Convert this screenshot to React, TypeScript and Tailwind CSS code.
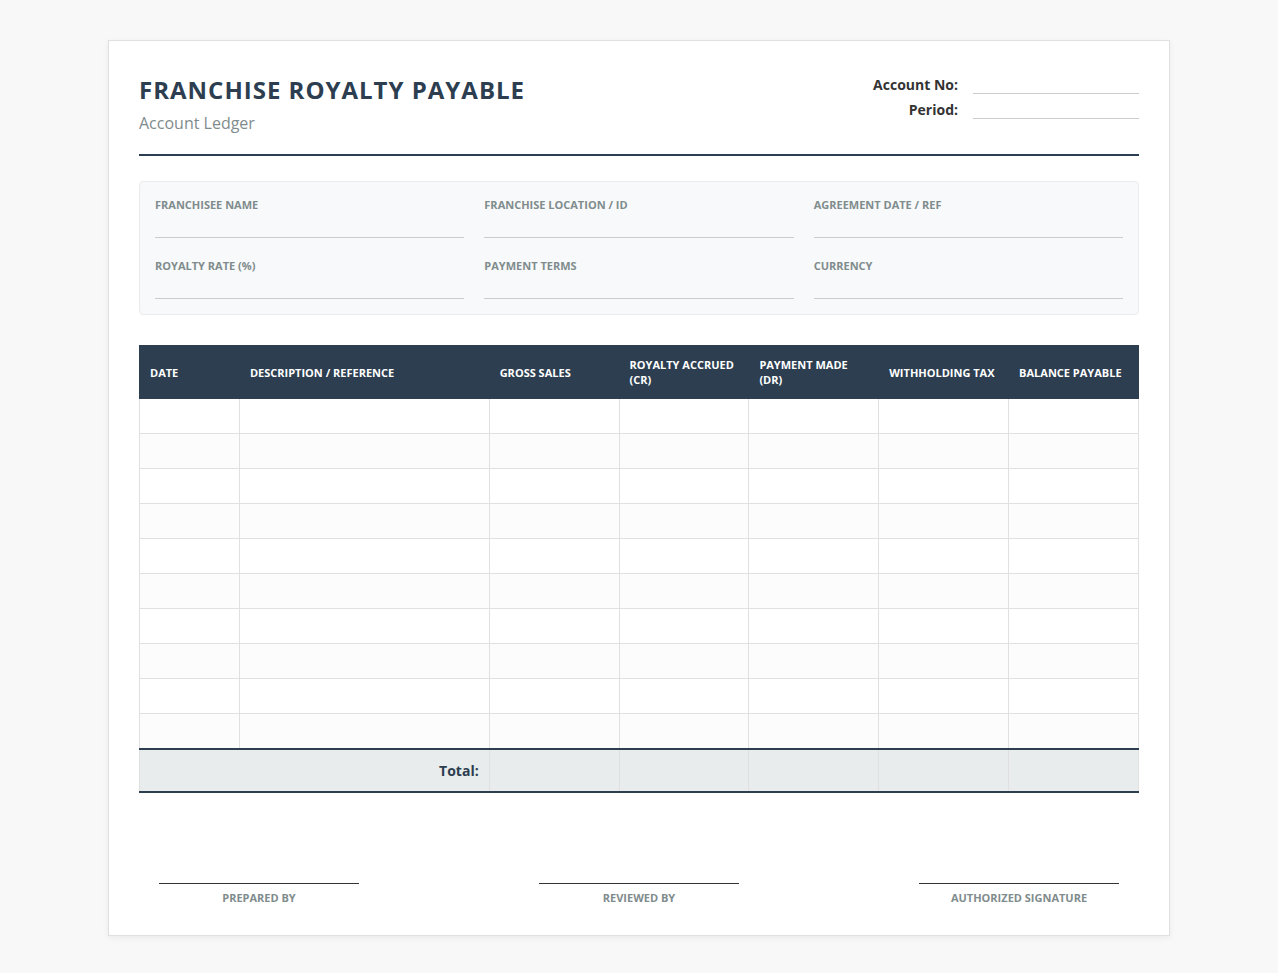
const font = { fontFamily: '"Open Sans", "Liberation Sans", sans-serif' };

const infoFields = [
  "Franchisee Name",
  "Franchise Location / ID",
  "Agreement Date / Ref",
  "Royalty Rate (%)",
  "Payment Terms",
  "Currency",
];

const columns = [
  { label: "Date", w: "w-[10%]" },
  { label: "Description / Reference", w: "w-[25%]" },
  { label: "Gross Sales", w: "w-[13%]" },
  { label: "Royalty Accrued (CR)", w: "w-[13%]" },
  { label: "Payment Made (DR)", w: "w-[13%]" },
  { label: "Withholding Tax", w: "w-[13%]" },
  { label: "Balance Payable", w: "w-[13%]" },
];

const rows = Array.from({ length: 10 });

export default function App() {
  return (
    <div className="min-h-screen bg-[#f8f8f8] pt-10 pb-10" style={font}>
      <div className="mx-auto w-[1062px] border border-[#e0e0e0] bg-white p-[30px] shadow-[0_2px_6px_rgba(0,0,0,0.06)]">
        {/* header */}
        <div className="flex justify-between border-b-2 border-[#2c3e50] pb-[20px]">
          <div>
            <h1 className="mt-[2px] text-[24px] font-bold uppercase leading-[34px] tracking-[1px] text-[#2c3e50]">
              Franchise Royalty Payable
            </h1>
            <div className="mt-[5px] text-[16px] leading-[22px] text-[#7f8c8d]">Account Ledger</div>
          </div>
          <div className="flex flex-col gap-[6px] pt-[4px]">
            {["Account No:", "Period:"].map((l) => (
              <div key={l} className="flex items-end gap-[15px]">
                <span className="w-[150px] text-right text-[14px] font-bold leading-[19px] text-[#333]">{l}</span>
                <span className="h-[19px] w-[166px] border-b border-[#ccc]" />
              </div>
            ))}
          </div>
        </div>

        {/* info box */}
        <div className="mt-[25px] grid grid-cols-3 gap-x-[20px] gap-y-[20px] rounded-[4px] border border-[#e9ecef] bg-[#f8f9fa] p-[15px]">
          {infoFields.map((f) => (
            <div key={f}>
              <div className="text-[11px] font-bold uppercase leading-[15px] text-[#7f8c8d]">{f}</div>
              <div className="mt-[5px] h-[21px] border-b border-[#ccc]" />
            </div>
          ))}
        </div>

        {/* ledger table */}
        <table className="mt-[30px] w-full table-fixed border-collapse">
          <thead>
            <tr className="bg-[#2c3e50]">
              {columns.map((c) => (
                <th
                  key={c.label}
                  className={`${c.w} border border-[#2c3e50] px-[10px] py-[11px] text-left text-[11px] font-bold uppercase leading-[15px] text-white`}
                >
                  {c.label}
                </th>
              ))}
            </tr>
          </thead>
          <tbody>
            {rows.map((_, i) => (
              <tr key={i} className={i % 2 === 1 ? "bg-[#fcfcfc]" : "bg-white"}>
                {columns.map((c) => (
                  <td key={c.label} className="h-[35px] border border-[#e0e0e0]" />
                ))}
              </tr>
            ))}
            <tr className="bg-[#e9ecec]">
              <td
                colSpan={2}
                className="h-[43px] border-x border-t-2 border-b-2 border-x-[#e0e0e0] border-y-[#2c3e50] px-[10px] text-right text-[14px] font-bold text-[#2c3e50]"
              >
                Total:
              </td>
              {columns.slice(2).map((c) => (
                <td key={c.label} className="border-x border-t-2 border-b-2 border-x-[#e0e0e0] border-y-[#2c3e50]" />
              ))}
            </tr>
          </tbody>
        </table>

        {/* signatures */}
        <div className="mt-[90px] flex justify-between">
          {["Prepared By", "Reviewed By", "Authorized Signature"].map((s) => (
            <div key={s} className="w-[240px] px-[20px] text-center">
              <div className="border-t border-[#333]" />
              <div className="mt-[6px] text-[11px] font-bold uppercase leading-[15px] text-[#7f8c8d]">{s}</div>
            </div>
          ))}
        </div>
      </div>
    </div>
  );
}
